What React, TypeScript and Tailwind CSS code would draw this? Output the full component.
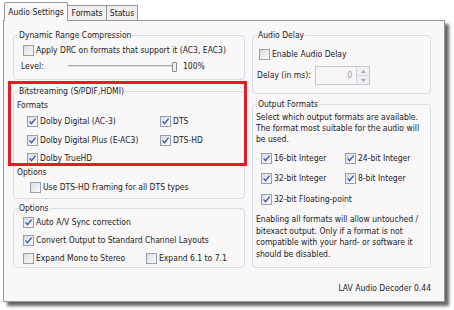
import React from "react";

const PAGE = "bg-[#faf7f9]";

function Cb({ checked }: { checked?: boolean }) {
  return (
    <span className="w-[11px] h-[11px] shrink-0 border border-[#97a1ad] bg-linear-to-br from-[#dcdcdf] to-[#fdfdfd] flex items-center justify-center">
      {checked && (
        <svg width="9" height="9" viewBox="0 0 9 9">
          <path d="M1.6 4.4 L3.5 6.7 L7.6 1.6" stroke="#3152b8" strokeWidth="1.3" fill="none" />
        </svg>
      )}
    </span>
  );
}

function Row({ checked, label, className = "" }: { checked?: boolean; label: string; className?: string }) {
  return (
    <div className={`flex items-center h-[13px] gap-[2px] ${className}`}>
      <Cb checked={checked} />
      <span className="whitespace-nowrap">{label}</span>
    </div>
  );
}

function Box({ title, className = "", children }: { title: string; className?: string; children?: React.ReactNode }) {
  return (
    <div className={`relative border border-[#d6dce5] rounded-[4px] ${className}`}>
      <span className={`absolute -top-[7px] left-[4px] px-[1px] leading-[13px] whitespace-nowrap ${PAGE}`}>{title}</span>
      {children}
    </div>
  );
}

export default function App() {
  return (
    <div
      className="relative w-[454px] h-[310px] bg-white text-[8.5px] leading-[13px] text-[#222222] overflow-hidden"
      style={{ fontFamily: '"DejaVu Sans Condensed", "Liberation Sans", Arial, sans-serif' }}
    >
      {/* tabs */}
      <div className="flex items-end h-[20px] pl-[4px]">
        <div className={`relative z-10 -mb-[1px] h-[19px] w-[64px] border border-b-0 border-[#919b9c] rounded-t-[2px] ${PAGE} flex justify-center pt-[3px]`}>
          Audio Settings
        </div>
        <div className="h-[15px] w-[39px] border border-b-0 border-l-0 border-[#919b9c] bg-[#f1eff1] flex items-center justify-center">
          Formats
        </div>
        <div className="h-[15px] w-[31px] border border-b-0 border-l-0 border-[#919b9c] bg-[#f1eff1] flex items-center justify-center">
          Status
        </div>
      </div>

      {/* page */}
      <div className={`ml-[3px] w-[442px] h-[282px] border border-[#919b9c] ${PAGE} shadow-[4px_4px_3px_rgba(0,0,0,0.6)] flex flex-col`}>
        <div className="flex gap-[7px] pl-[9px] pt-[14px]">
          {/* left column */}
          <div className="w-[232px] flex flex-col">
            <Box title="Dynamic Range Compression" className="h-[45px]">
              <div className="pt-[8px] pl-[7px] flex flex-col">
                <Row label="Apply DRC on formats that support it (AC3, EAC3)" className="ml-[2px]" />
                <div className="flex items-center h-[13px] mt-[3px]">
                  <span className="w-[47px]">Level:</span>
                  <div className="w-[104px] h-[3px] border-t border-[#a9a9a9] border-b border-b-white bg-[#dedede]" />
                  <div className="w-[5px] h-[10px] border border-[#8c8c8c] rounded-[1px] bg-[#f3f3f3]" />
                  <span className="ml-[6px]">100%</span>
                </div>
              </div>
            </Box>

            <Box title="Bitstreaming (S/PDIF,HDMI)" className="h-[108px] mt-[11px]">
              <div className="pt-[7px] pl-[3px] flex flex-col">
                <div className="h-[13px]">Formats</div>
                <div className="pl-[10px] grid grid-cols-[133px_1fr] mt-[3px]">
                  <Row checked label="Dolby Digital (AC-3)" />
                  <Row checked label="DTS" />
                  <Row checked label="Dolby Digital Plus (E-AC3)" className="mt-[6px]" />
                  <Row checked label="DTS-HD" className="mt-[6px]" />
                  <Row checked label="Dolby TrueHD" className="mt-[5px]" />
                </div>
                <div className="h-[13px] mt-[1px]">Options</div>
                <Row label="Use DTS-HD Framing for all DTS types" className="ml-[13px] mt-[2px]" />
              </div>
            </Box>

            <Box title="Options" className="h-[60px] mt-[9px]">
              <div className="pt-[7px] pl-[9px] flex flex-col">
                <Row checked label="Auto A/V Sync correction" />
                <Row checked label="Convert Output to Standard Channel Layouts" className="mt-[5px]" />
                <div className="grid grid-cols-[123px_1fr] mt-[5px]">
                  <Row label="Expand Mono to Stereo" />
                  <Row label="Expand 6.1 to 7.1" />
                </div>
              </div>
            </Box>
          </div>

          {/* right column */}
          <div className="w-[179px] flex flex-col">
            <Box title="Audio Delay" className="h-[59px]">
              <div className="pt-[12px] pl-[4px] flex flex-col">
                <Row label="Enable Audio Delay" className="ml-[2px]" />
                <div className="flex items-center mt-[5px]">
                  <span className="w-[58px] whitespace-nowrap">Delay (in ms):</span>
                  <div className="flex h-[19px] w-[55px] border border-[#c3cad4] bg-[#f7f5f6]">
                    <div className="flex-1 flex items-center justify-end pr-[4px] text-[#9c9c9c]">0</div>
                    <div className="w-[13px] flex flex-col border-l border-[#d3d7dd]">
                      <div className="flex-1 flex items-center justify-center border-b border-[#d3d7dd] bg-[#f0eef0]">
                        <svg width="5" height="3" viewBox="0 0 5 3"><path d="M0 3 L2.5 0 L5 3Z" fill="#a8a8a8" /></svg>
                      </div>
                      <div className="flex-1 flex items-center justify-center bg-[#f0eef0]">
                        <svg width="5" height="3" viewBox="0 0 5 3"><path d="M0 0 L2.5 3 L5 0Z" fill="#a8a8a8" /></svg>
                      </div>
                    </div>
                  </div>
                </div>
              </div>
            </Box>

            <Box title="Output Formats" className="h-[164px] mt-[10px]">
              <div className="pt-[7px] pl-[3px] flex flex-col">
                <p className="leading-[11px] whitespace-nowrap">
                  Select which output formats are available.
                  <br />
                  The format most suitable for the audio will
                  <br />
                  be used.
                </p>
                <div className="pl-[5px] grid grid-cols-[84px_1fr] mt-[7px]">
                  <Row checked label="16-bit Integer" />
                  <Row checked label="24-bit Integer" />
                  <Row checked label="32-bit Integer" className="mt-[7px]" />
                  <Row checked label="8-bit Integer" className="mt-[7px]" />
                  <Row checked label="32-bit Floating-point" className="mt-[8px]" />
                </div>
                <p className="leading-[11.5px] whitespace-nowrap mt-[8px]">
                  Enabling all formats will allow untouched /
                  <br />
                  bitexact output. Only if a format is not
                  <br />
                  compatible with your hard- or software it
                  <br />
                  should be disabled.
                </p>
              </div>
            </Box>
          </div>
        </div>

        <div className="mt-[14px] pr-[13px] flex justify-end h-[13px]">LAV Audio Decoder 0.44</div>
      </div>

      {/* red annotation */}
      <div className="absolute left-[8px] top-[81px] w-[239px] h-[85px] border-[3px] border-[#e41c24]" />
    </div>
  );
}
